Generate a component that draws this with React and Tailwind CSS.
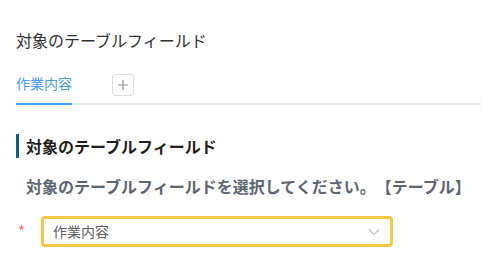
export default function App() {
  return (
    <div
      className="w-[481px] h-[258px] bg-white overflow-hidden [text-spacing-trim:space-all]"
      style={{ fontFamily: '"Noto Sans CJK JP", "Noto Sans", sans-serif' }}
    >
      {/* Title */}
      <div className="pt-[29px] px-4 text-[16px] leading-[22px] text-[#303133]">対象のテーブルフィールド</div>

      {/* Tabs */}
      <div className="mt-[22px] flex items-end border-b-2 border-[#e4e7ed] ml-4">
        <div className="relative pb-[10px] text-[14px] leading-[20px] text-[#4a9cf6]">
          作業内容
          <span className="absolute left-0 right-0 -bottom-[2px] h-[2px] bg-[#409eff]" />
        </div>
        <div className="ml-10 mb-[7px] w-[22px] h-[22px] rounded-[3px] border border-[#dcdfe6] flex items-center justify-center text-[#909399]">
          <svg width="12" height="12" viewBox="0 0 12 12">
            <path d="M6 1v10M1 6h10" stroke="currentColor" strokeWidth="1.2" />
          </svg>
        </div>
      </div>

      {/* Section */}
      <div className="mt-[29px] ml-4 flex items-center h-[24px] border-l-[3px] border-[#0b5e8e] pl-[7px]">
        <span className="text-[16px] font-bold text-[#1f1f1f] leading-[22px]">対象のテーブルフィールド</span>
      </div>

      <div className="mt-[17px] pl-[26px] text-[16px] font-bold text-[#5e6673] leading-[22px] whitespace-nowrap">
        対象のテーブルフィールドを選択してください。【テーブル】
      </div>

      {/* Select */}
      <div className="mt-[19px] flex items-center">
        <span className="w-[41px] pl-[18px] text-[#f56c6c] text-[15px]">*</span>
        <div className="w-[352px] h-[31px] rounded-[4px] border-[3px] border-[#f7c843] flex items-center justify-between pl-[9px] pr-[10px]">
          <span className="text-[14px] text-[#606266]">作業内容</span>
          <svg width="12" height="8" viewBox="0 0 12 8">
            <path d="M1 1.5l5 5 5-5" fill="none" stroke="#c0c4cc" strokeWidth="1.2" />
          </svg>
        </div>
      </div>
    </div>
  );
}
